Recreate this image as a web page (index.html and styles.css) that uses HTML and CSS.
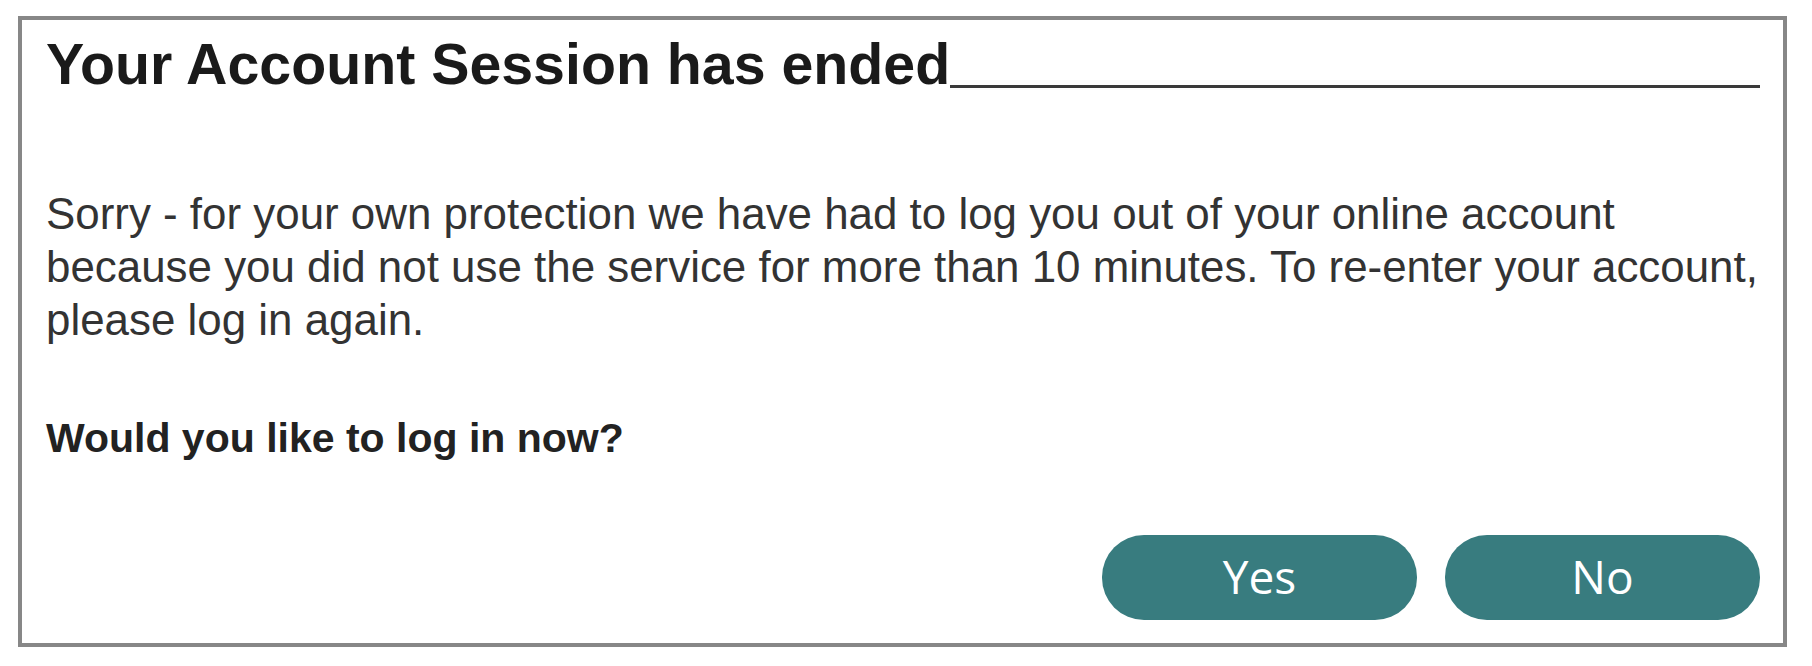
FILE: index.html
```html
<!DOCTYPE html>
<html lang="en">
<head>
<meta charset="utf-8">
<title>Your Account Session has ended</title>
<link rel="stylesheet" href="styles.css">
</head>
<body>
  <div class="dialog">
    <div class="title-row">
      <h1 class="title">Your Account Session has ended</h1>
      <span class="title-rule"></span>
    </div>
    <p class="message">Sorry - for your own protection we have had to log you out of your online account<br>because you did not use the service for more than 10 minutes. To re-enter your account,<br>please log in again.</p>
    <p class="question">Would you like to log in now?</p>
    <div class="actions">
      <button class="btn" type="button">Yes</button>
      <button class="btn" type="button">No</button>
    </div>
  </div>
</body>
</html>
```

FILE: styles.css
```css
html, body {
  margin: 0;
  padding: 0;
  background: #ffffff;
}

body {
  padding: 16px 0 0 18px;
  font-family: "Liberation Sans", Arial, sans-serif;
  color: #262626;
}

.dialog {
  box-sizing: border-box;
  width: 1769px;
  height: 631px;
  border: 4px solid #878787;
  padding: 16px 23px 0 24px;
  display: flex;
  flex-direction: column;
}

.title-row {
  display: flex;
  align-items: flex-end;
}

.title {
  margin: 0;
  font-size: 57.3px;
  line-height: 57px;
  font-weight: bold;
  color: #1a1a1a;
  white-space: nowrap;
}

.title-rule {
  flex: 1;
  height: 3px;
  background: #3a3a3a;
  margin-bottom: 5px;
}

.message {
  margin: 94px 0 0 0;
  font-size: 43.9px;
  line-height: 53px;
  color: #333333;
  white-space: nowrap;
}

.question {
  margin: 66px 0 0 0;
  font-size: 41px;
  line-height: 53px;
  font-weight: bold;
  color: #222222;
}

.actions {
  margin-top: auto;
  margin-bottom: 23px;
  display: flex;
  justify-content: flex-end;
  gap: 28px;
}

.btn {
  width: 315px;
  height: 85px;
  border: none;
  border-radius: 42px;
  background: #387c7f;
  color: #ffffff;
  font-family: "Open Sans", "Noto Sans", sans-serif;
  font-size: 46px;
  padding: 0 0 3px 0;
  cursor: pointer;
}
```
